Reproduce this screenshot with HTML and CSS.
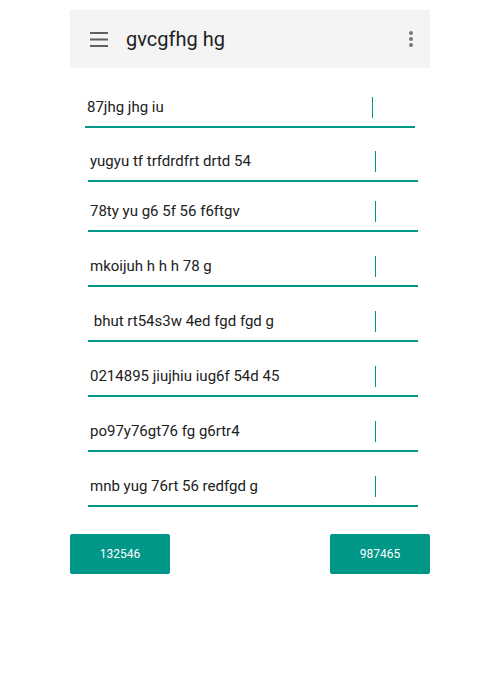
FILE: index.html
```html
<!DOCTYPE html>
<html>
<head>
<meta charset="utf-8">
<link rel="stylesheet" href="styles.css">
</head>
<body>
<div class="page">
  <header class="appbar">
    <svg class="menu" width="18" height="15" viewBox="0 0 18 15"><rect x="0" y="0" width="18" height="2" fill="#5f5f5f"/><rect x="0" y="6.5" width="18" height="2" fill="#5f5f5f"/><rect x="0" y="13" width="18" height="2" fill="#5f5f5f"/></svg>
    <div class="title">gvcgfhg hg</div>
    <svg class="more" width="4" height="16" viewBox="0 0 4 16"><circle cx="2" cy="2" r="2" fill="#777"/><circle cx="2" cy="8" r="2" fill="#777"/><circle cx="2" cy="14" r="2" fill="#777"/></svg>
  </header>
  <div class="fields">
    <div class="field field-first"><span class="text">87jhg jhg iu</span><span class="cursor"></span></div>
    <div class="field field-2"><span class="text">yugyu tf trfdrdfrt drtd 54</span><span class="cursor"></span></div>
    <div class="field field-3"><span class="text">78ty yu g6 5f 56 f6ftgv</span><span class="cursor"></span></div>
    <div class="field"><span class="text">mkoijuh h h h 78 g</span><span class="cursor"></span></div>
    <div class="field"><span class="text"> bhut rt54s3w 4ed fgd fgd g</span><span class="cursor"></span></div>
    <div class="field"><span class="text">0214895 jiujhiu iug6f 54d 45</span><span class="cursor"></span></div>
    <div class="field"><span class="text">po97y76gt76 fg g6rtr4</span><span class="cursor"></span></div>
    <div class="field"><span class="text">mnb yug 76rt 56 redfgd g</span><span class="cursor"></span></div>
  </div>
  <div class="actions">
    <button class="btn">132546</button>
    <button class="btn">987465</button>
  </div>
</div>
</body>
</html>
```
FILE: styles.css
```css
html, body {
  margin: 0;
  padding: 0;
  background: #ffffff;
  font-family: Roboto, "Liberation Sans", sans-serif;
}
.page {
  width: 360px;
  padding: 10px 0 0 70px;
}
.appbar {
  height: 58px;
  background: #f4f4f4;
  display: flex;
  align-items: center;
  padding: 0 17px 0 20px;
  box-sizing: border-box;
}
.menu {
  display: block;
  flex: none;
}
.title {
  margin-left: 18px;
  font-size: 20px;
  color: #212121;
  flex: 1;
  line-height: 24px;
  position: relative;
  top: 0px;
}
.more {
  display: block;
  flex: none;
}
.fields {
  display: flex;
  flex-direction: column;
  padding-top: 29px;
}
.field {
  width: 330px;
  margin-left: 18px;
  margin-top: 24px;
  display: flex;
  align-items: flex-start;
  padding-bottom: 8px;
  border-bottom: 2px solid #009688;
  box-sizing: content-box;
}
.field-first {
  margin-left: 15px;
  margin-top: 0;
}
.field-2 { margin-top: 23px; }
.field-3 { margin-top: 19px; }
.text {
  flex: none;
  width: 284px;
  padding-left: 2px;
  height: 21px;
  line-height: 21px;
  font-size: 15px;
  color: #212121;
  white-space: pre;
}
.cursor {
  flex: none;
  width: 1px;
  height: 21px;
  background: #009688;
  margin-left: 1px;
}
.actions {
  display: flex;
  justify-content: space-between;
  margin-top: 27px;
}
.btn {
  width: 100px;
  height: 40px;
  border: none;
  border-radius: 2px;
  background: #009688;
  color: #ffffff;
  font-family: Roboto, "Liberation Sans", sans-serif;
  font-size: 12px;
  padding: 0;
}
```
